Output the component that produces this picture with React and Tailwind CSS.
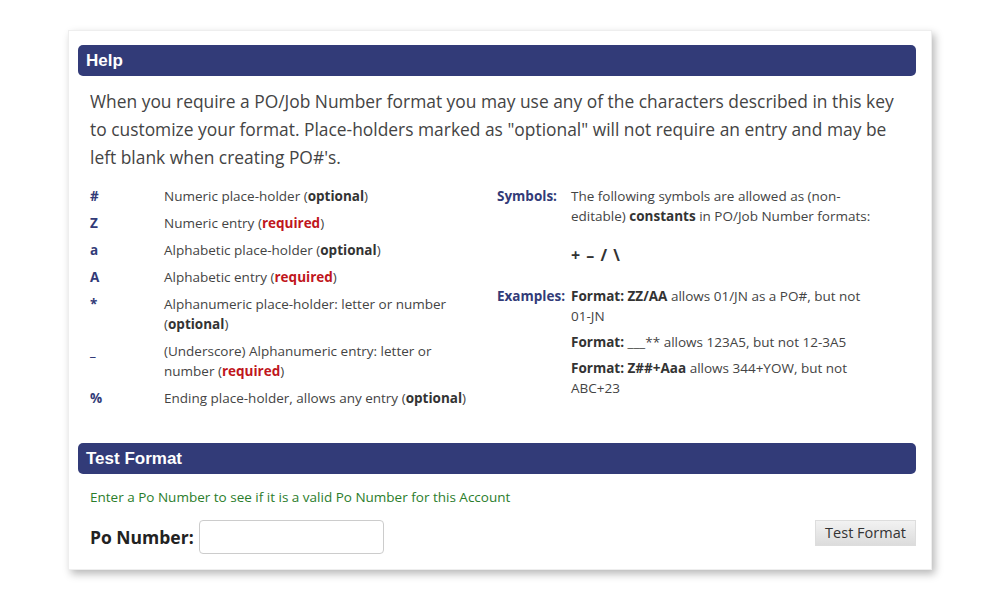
const keys = [
  { sym: "#", text: "Numeric place-holder", tag: "optional" },
  { sym: "Z", text: "Numeric entry", tag: "required" },
  { sym: "a", text: "Alphabetic place-holder", tag: "optional" },
  { sym: "A", text: "Alphabetic entry", tag: "required" },
  { sym: "*", text: "Alphanumeric place-holder: letter or number", tag: "optional" },
  { sym: "_", text: "(Underscore) Alphanumeric entry: letter or number", tag: "required" },
  { sym: "%", text: "Ending place-holder, allows any entry", tag: "optional" },
];

function Tag({ tag }) {
  return (
    <>
      (
      <b className={tag === "required" ? "font-bold text-[#c0161c]" : "font-bold text-[#333]"}>{tag}</b>)
    </>
  );
}

function Bar({ children }) {
  return (
    <div className="h-[31px] rounded-[5px] bg-[#323b78] px-2 flex items-center text-white text-[17px] font-bold font-['Liberation_Sans',Arial,sans-serif]">
      {children}
    </div>
  );
}

export default function App() {
  return (
    <div className="w-[1000px] h-[600px] bg-white pt-[30px] pl-[68px] font-['Open_Sans',sans-serif]">
      <div className="w-[864px] h-[540px] bg-white border border-[#eee] shadow-[3px_4px_8px_rgba(0,0,0,0.28)] pl-[9px] pr-[15px] pt-[14px]">
        <Bar>Help</Bar>
        <p className="mt-[11px] px-3 text-[17.4px] leading-[28px] text-[#444]">
          When you require a PO/Job Number format you may use any of the characters described in this key to customize your format. Place-holders marked as "optional" will not require an entry and may be left blank when creating PO#'s.
        </p>

        <div className="flex mt-[15px] px-3 text-[13.5px] leading-[20px] text-[#444]">
          <div className="w-[407px] flex flex-col gap-[7px]">
            {keys.map((k) => (
              <div key={k.sym} className="flex">
                <span className="w-[74px] shrink-0 font-bold text-[#323b78]">{k.sym}</span>
                <span className="w-[310px]">
                  {k.text} <Tag tag={k.tag} />
                </span>
              </div>
            ))}
          </div>
          <div className="flex-1">
            <div className="flex">
              <span className="w-[74px] shrink-0 font-bold text-[#323b78]">Symbols:</span>
              <div className="w-[305px]">
                <p>
                  The following symbols are allowed as (non-editable) <b className="text-[#333]">constants</b> in PO/Job Number formats:
                </p>
                <p className="mt-[19px] text-[16px] font-bold text-[#333] tracking-[1px]">+ – / \</p>
              </div>
            </div>
            <div className="flex mt-[21px]">
              <span className="w-[74px] shrink-0 font-bold text-[#323b78]">Examples:</span>
              <div className="w-[300px] flex flex-col gap-[6px]">
                <p>
                  <b className="text-[#333]">Format: ZZ/AA</b> allows 01/JN as a PO#, but not 01-JN
                </p>
                <p>
                  <b className="text-[#333]">Format:</b> ___** allows 123A5, but not 12-3A5
                </p>
                <p>
                  <b className="text-[#333]">Format: Z##+Aaa</b> allows 344+YOW, but not ABC+23
                </p>
              </div>
            </div>
          </div>
        </div>

        <div className="mt-[35px]">
          <Bar>Test Format</Bar>
        </div>
        <p className="mt-[13px] px-3 text-[13.5px] text-[#2b7d2b]">
          Enter a Po Number to see if it is a valid Po Number for this Account
        </p>
        <div className="mt-[13px] pl-3 flex items-start justify-between">
          <div className="flex items-center gap-[5px]">
            <span className="text-[17.5px] font-bold text-[#222]">Po Number:</span>
            <input className="w-[185px] h-[34px] border border-[#ccc] rounded-[4px] bg-white outline-none" />
          </div>
          <button className="h-[26px] w-[101px] bg-gradient-to-b from-[#f2f2f2] to-[#dcdcdc] border border-[#ddd] text-[14.5px] text-[#333]">
            Test Format
          </button>
        </div>
      </div>
    </div>
  );
}
